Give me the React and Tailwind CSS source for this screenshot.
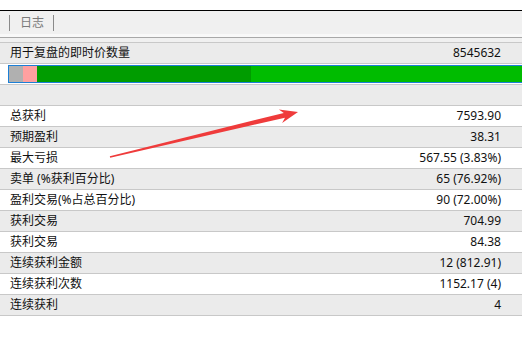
import React from "react";

const rows = [
  ["总获利", "7593.90"],
  ["预期盈利", "38.31"],
  ["最大亏损", "567.55 (3.83%)"],
  ["卖单 (%获利百分比)", "65 (76.92%)"],
  ["盈利交易(%占总百分比)", "90 (72.00%)"],
  ["获利交易", "704.99"],
  ["获利交易", "84.38"],
  ["连续获利金额", "12 (812.91)"],
  ["连续获利次数", "1152.17 (4)"],
  ["连续获利", "4"],
];

export default function App() {
  return (
    <div
      className="relative w-[522px] h-[342px] overflow-hidden bg-white text-[12px] text-[#111]"
      style={{ fontFamily: '"Noto Sans", "Noto Sans CJK SC", sans-serif' }}
    >
      <div className="h-[10px] bg-white" />
      <div className="h-[1px] bg-black" />
      <div className="h-[23px] bg-[#f0f0f0] flex items-center">
        <div className="ml-[9px] w-[1px] h-[16px] bg-[#8a8a8a]" />
        <div className="ml-[10px] text-[#7a7a7a] leading-none">日志</div>
        <div className="ml-[9px] w-[1px] h-[16px] bg-[#8a8a8a]" />
      </div>
      <div className="h-[3px] bg-[#f8f8f8]" />
      <div className="h-[1px] bg-[#a8a8a8]" />
      <div className="h-[4px] bg-[#f0f0f0]" />
      <div className="h-[1px] bg-[#c8c8c8]" />
      <div className="h-[20px] bg-[#ebebeb] flex items-center justify-between pl-[10px] pr-[21px] leading-none">
        <span>用于复盘的即时价数量</span>
        <span>8545632</span>
      </div>
      <div className="h-[1px] bg-[#c8c8c8]" />
      <div className="h-[20px] bg-white flex items-center">
        <div className="ml-[8px] flex-1 h-[18px] border border-r-0 border-[#1c7fd6] flex">
          <div className="w-[14px] bg-[#b0b0b0]" />
          <div className="w-[14px] bg-[#ffa0a0]" />
          <div className="w-[214px] bg-[#009c00]" />
          <div className="flex-1 bg-[#00bc00]" />
        </div>
      </div>
      <div className="h-[1px] bg-[#c8c8c8]" />
      <div className="h-[20px] bg-[#ebebeb]" />
      <div className="h-[1px] bg-[#c8c8c8]" />
      {rows.map(([label, value], i) => (
        <div key={i}>
          <div
            className={
              "h-[20px] flex items-center justify-between pl-[10px] pr-[21px] leading-none " +
              (i % 2 === 0 ? "bg-white" : "bg-[#ebebeb]")
            }
          >
            <span>{label}</span>
            <span>{value}</span>
          </div>
          <div className="h-[1px] bg-[#c8c8c8]" />
        </div>
      ))}
      <svg
        className="absolute inset-0 pointer-events-none"
        width="522"
        height="342"
        viewBox="0 0 522 342"
      >
        <polygon
          points="109.8,156.2 283.8,112.9 278.9,109.4 298,112 282.1,123 285,117.7 110.2,157.8"
          fill="#ef3b3b"
        />
      </svg>
    </div>
  );
}
